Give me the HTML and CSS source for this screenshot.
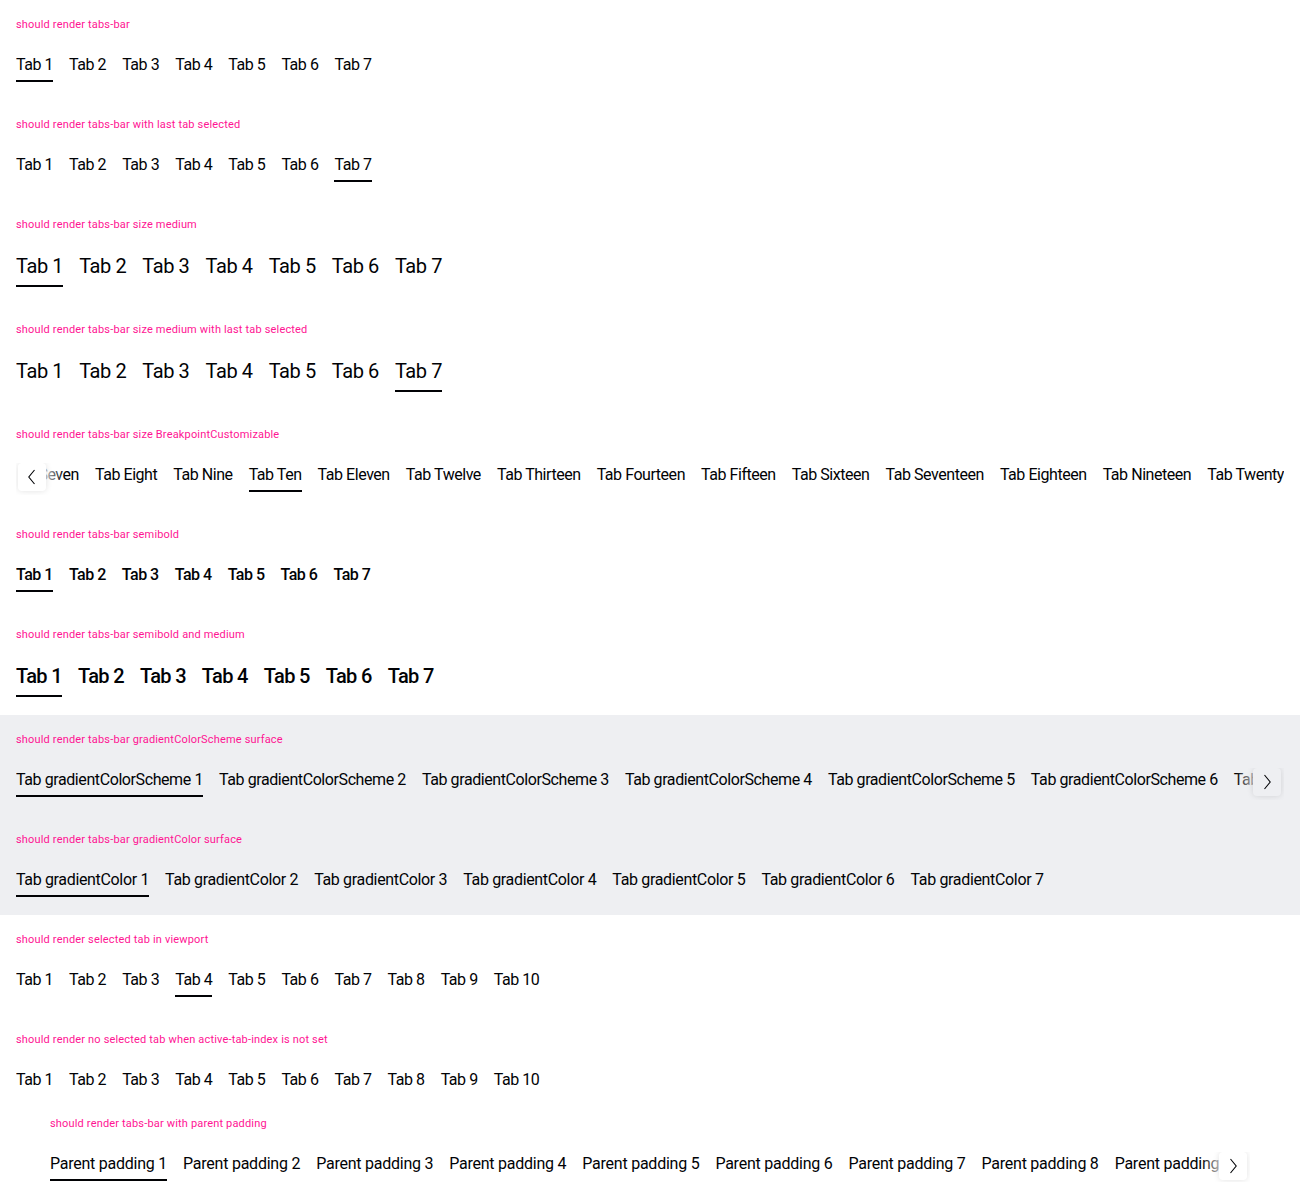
FILE: index.html
```html
<!DOCTYPE html>
<html>
<head>
<meta charset="utf-8">
<link rel="stylesheet" href="styles.css">
</head>
<body>
<div class="playground">
  <p class="label">should render tabs-bar</p>
  <div class="bar"><div class="track">
    <span class="tab active">Tab 1</span><span class="tab">Tab 2</span><span class="tab">Tab 3</span><span class="tab">Tab 4</span><span class="tab">Tab 5</span><span class="tab">Tab 6</span><span class="tab">Tab 7</span>
  </div></div>
</div>
<div class="playground">
  <p class="label">should render tabs-bar with last tab selected</p>
  <div class="bar"><div class="track">
    <span class="tab">Tab 1</span><span class="tab">Tab 2</span><span class="tab">Tab 3</span><span class="tab">Tab 4</span><span class="tab">Tab 5</span><span class="tab">Tab 6</span><span class="tab active">Tab 7</span>
  </div></div>
</div>
<div class="playground">
  <p class="label">should render tabs-bar size medium</p>
  <div class="bar medium"><div class="track">
    <span class="tab active">Tab 1</span><span class="tab">Tab 2</span><span class="tab">Tab 3</span><span class="tab">Tab 4</span><span class="tab">Tab 5</span><span class="tab">Tab 6</span><span class="tab">Tab 7</span>
  </div></div>
</div>
<div class="playground">
  <p class="label">should render tabs-bar size medium with last tab selected</p>
  <div class="bar medium"><div class="track">
    <span class="tab">Tab 1</span><span class="tab">Tab 2</span><span class="tab">Tab 3</span><span class="tab">Tab 4</span><span class="tab">Tab 5</span><span class="tab">Tab 6</span><span class="tab active">Tab 7</span>
  </div></div>
</div>
<div class="playground">
  <p class="label">should render tabs-bar size BreakpointCustomizable</p>
  <div class="bar scrolled-end"><div class="track">
    <span class="tab">Tab One</span><span class="tab">Tab Two</span><span class="tab">Tab Three</span><span class="tab">Tab Four</span><span class="tab">Tab Five</span><span class="tab">Tab Six</span><span class="tab">Tab Seven</span><span class="tab">Tab Eight</span><span class="tab">Tab Nine</span><span class="tab active">Tab Ten</span><span class="tab">Tab Eleven</span><span class="tab">Tab Twelve</span><span class="tab">Tab Thirteen</span><span class="tab">Tab Fourteen</span><span class="tab">Tab Fifteen</span><span class="tab">Tab Sixteen</span><span class="tab">Tab Seventeen</span><span class="tab">Tab Eighteen</span><span class="tab">Tab Nineteen</span><span class="tab">Tab Twenty</span>
  </div>
  <div class="fade fade-prev"><span class="scroll-btn"><svg width="16" height="16" viewBox="0 0 16 16"><path d="M10.5 1 L4.8 8 L10.5 15" fill="none" stroke="#010205" stroke-width="1.1"/></svg></span></div>
  </div>
</div>
<div class="playground">
  <p class="label">should render tabs-bar semibold</p>
  <div class="bar semibold"><div class="track">
    <span class="tab active">Tab 1</span><span class="tab">Tab 2</span><span class="tab">Tab 3</span><span class="tab">Tab 4</span><span class="tab">Tab 5</span><span class="tab">Tab 6</span><span class="tab">Tab 7</span>
  </div></div>
</div>
<div class="playground">
  <p class="label">should render tabs-bar semibold and medium</p>
  <div class="bar medium semibold"><div class="track">
    <span class="tab active">Tab 1</span><span class="tab">Tab 2</span><span class="tab">Tab 3</span><span class="tab">Tab 4</span><span class="tab">Tab 5</span><span class="tab">Tab 6</span><span class="tab">Tab 7</span>
  </div></div>
</div>
<div class="playground surface">
  <p class="label">should render tabs-bar gradientColorScheme surface</p>
  <div class="bar long"><div class="track">
    <span class="tab active">Tab gradientColorScheme 1</span><span class="tab">Tab gradientColorScheme 2</span><span class="tab">Tab gradientColorScheme 3</span><span class="tab">Tab gradientColorScheme 4</span><span class="tab">Tab gradientColorScheme 5</span><span class="tab">Tab gradientColorScheme 6</span><span class="tab">Tab gradientColorScheme 7</span>
  </div>
  <div class="fade fade-next fade-surface"><span class="scroll-btn btn-surface"><svg width="16" height="16" viewBox="0 0 16 16"><path d="M5.5 1 L11.2 8 L5.5 15" fill="none" stroke="#010205" stroke-width="1.1"/></svg></span></div>
  </div>
</div>
<div class="playground surface">
  <p class="label">should render tabs-bar gradientColor surface</p>
  <div class="bar mid"><div class="track">
    <span class="tab active">Tab gradientColor 1</span><span class="tab">Tab gradientColor 2</span><span class="tab">Tab gradientColor 3</span><span class="tab">Tab gradientColor 4</span><span class="tab">Tab gradientColor 5</span><span class="tab">Tab gradientColor 6</span><span class="tab">Tab gradientColor 7</span>
  </div></div>
</div>
<div class="playground">
  <p class="label">should render selected tab in viewport</p>
  <div class="bar"><div class="track">
    <span class="tab">Tab 1</span><span class="tab">Tab 2</span><span class="tab">Tab 3</span><span class="tab active">Tab 4</span><span class="tab">Tab 5</span><span class="tab">Tab 6</span><span class="tab">Tab 7</span><span class="tab">Tab 8</span><span class="tab">Tab 9</span><span class="tab">Tab 10</span>
  </div></div>
</div>
<div class="playground">
  <p class="label">should render no selected tab when active-tab-index is not set</p>
  <div class="bar"><div class="track">
    <span class="tab">Tab 1</span><span class="tab">Tab 2</span><span class="tab">Tab 3</span><span class="tab">Tab 4</span><span class="tab">Tab 5</span><span class="tab">Tab 6</span><span class="tab">Tab 7</span><span class="tab">Tab 8</span><span class="tab">Tab 9</span><span class="tab">Tab 10</span>
  </div></div>
</div>
<div class="playground parent-padding">
  <p class="label">should render tabs-bar with parent padding</p>
  <div class="bar parent"><div class="track">
    <span class="tab active">Parent padding 1</span><span class="tab">Parent padding 2</span><span class="tab">Parent padding 3</span><span class="tab">Parent padding 4</span><span class="tab">Parent padding 5</span><span class="tab">Parent padding 6</span><span class="tab">Parent padding 7</span><span class="tab">Parent padding 8</span><span class="tab">Parent padding 9</span><span class="tab">Parent padding 10</span>
  </div>
  <div class="fade fade-next"><span class="scroll-btn"><svg width="16" height="16" viewBox="0 0 16 16"><path d="M5.5 1 L11.2 8 L5.5 15" fill="none" stroke="#010205" stroke-width="1.1"/></svg></span></div>
  </div>
</div>
</body>
</html>
```

FILE: styles.css
```css
html, body {
  margin: 0;
  padding: 0;
  background: #ffffff;
}

body {
  font-family: Roboto, "Liberation Sans", sans-serif;
  color: #010205;
  overflow: hidden;
}

.playground {
  padding: 17px 16px 15px;
}

.playground.surface {
  background: #eeeff2;
}

.playground.parent-padding {
  padding: 1px 50px 0;
}

.label {
  margin: 0 0 20px;
  font-size: 11px;
  line-height: 16px;
  color: #ff1493;
  letter-spacing: 0.17px;
}

.bar {
  position: relative;
  overflow: hidden;
  padding-bottom: 3px;
}

.track {
  display: flex;
  gap: 16px;
  white-space: nowrap;
}

.scrolled-end .track {
  justify-content: flex-end;
}

.tab {
  flex: 0 0 auto;
  font-size: 16px;
  line-height: 24px;
  letter-spacing: -0.45px;
  padding-bottom: 3px;
  border-bottom: 2px solid transparent;
  color: #010205;
}

.long .tab {
  letter-spacing: -0.41px;
}

.mid .tab {
  letter-spacing: -0.34px;
}

.parent .tab {
  letter-spacing: -0.24px;
}

.tab.active {
  border-bottom-color: #010205;
}

.medium .tab {
  font-size: 20px;
  line-height: 28px;
  letter-spacing: -0.4px;
  padding-bottom: 5px;
}

.bar.medium {
  padding-bottom: 3px;
}

.playground:has(.bar.medium) .label {
  margin-bottom: 19px;
}

.semibold .tab {
  font-weight: 500;
  letter-spacing: -0.5px;
}

.medium.semibold .tab {
  letter-spacing: -0.66px;
}

.fade {
  position: absolute;
  top: 0;
  height: 28px;
  width: 48px;
  display: flex;
  align-items: center;
}

.fade-prev {
  left: 0;
  background: linear-gradient(to right, #ffffff 0%, #ffffff 50%, rgba(255,255,255,0) 100%);
  justify-content: flex-start;
}

.fade-next {
  right: 0;
  background: linear-gradient(to left, #ffffff 0%, #ffffff 50%, rgba(255,255,255,0) 100%);
  justify-content: flex-end;
}

.fade-surface {
  background: linear-gradient(to left, #eeeff2 0%, #eeeff2 50%, rgba(238,239,242,0) 100%);
}

.scroll-btn {
  width: 28px;
  height: 28px;
  margin: 0 3px 0 2px;
  border-radius: 4px;
  background: #ffffff;
  box-shadow: 0 0 6px rgba(0, 0, 0, 0.12);
  display: flex;
  align-items: center;
  justify-content: center;
}

.btn-surface {
  background: #eeeff2;
}
```
